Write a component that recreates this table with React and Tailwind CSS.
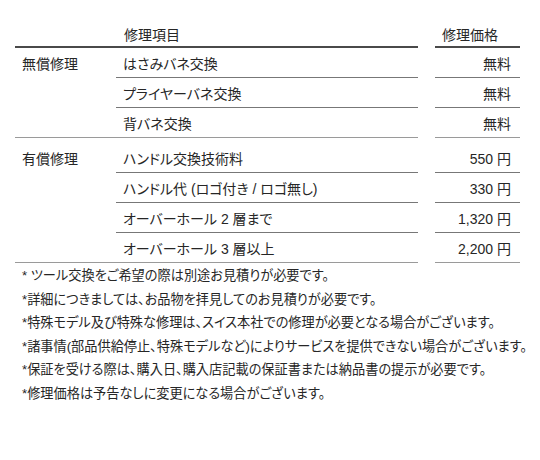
import React from "react";

const groups = [
  {
    name: "無償修理",
    mt: "",
    rows: [
      ["はさみバネ交換", "無料"],
      ["プライヤーバネ交換", "無料"],
      ["背バネ交換", "無料"],
    ],
  },
  {
    name: "有償修理",
    mt: "mt-[5px]",
    rows: [
      ["ハンドル交換技術料", "550 円"],
      ["ハンドル代 (ロゴ付き / ロゴ無し)", "330 円"],
      ["オーバーホール 2 層まで", "1,320 円"],
      ["オーバーホール 3 層以上", "2,200 円"],
    ],
  },
];

const notes = [
  "* ツール交換をご希望の際は別途お見積りが必要です。",
  "*詳細につきましては、お品物を拝見してのお見積りが必要です。",
  "*特殊モデル及び特殊な修理は、スイス本社での修理が必要となる場合がございます。",
  "*諸事情(部品供給停止、特殊モデルなど)によりサービスを提供できない場合がございます。",
  "*保証を受ける際は、購入日、購入店記載の保証書または納品書の提示が必要です。",
  "*修理価格は予告なしに変更になる場合がございます。",
];

export default function App() {
  return (
    <div className="w-[540px] h-[460px] bg-white text-[#262626] font-['Liberation_Sans','Noto_Sans_CJK_JP',sans-serif] [font-feature-settings:'palt'] overflow-hidden">
      <div className="ml-[15px] pt-[22px] w-[505px] text-[14px]">
        <div className="flex">
          <div className="flex w-[403px] h-[26px] border-b-2 border-[#4a4a4a]">
            <div className="w-[101px]" />
            <div className="pl-[8px] pt-[4px] leading-[18px]">修理項目</div>
          </div>
          <div className="ml-[17px] w-[85px] h-[26px] border-b-2 border-[#4a4a4a] pl-[7px] pt-[4px] leading-[18px]">
            修理価格
          </div>
        </div>
        {groups.map((g) => (
          <div key={g.name} className={`flex ${g.mt}`}>
            <div className="w-[101px] border-b border-[#9a9a9a] pl-[7px] pt-[7px] leading-[18px]">
              {g.name}
            </div>
            <div className="flex flex-col">
              {g.rows.map(([item, price], i) => {
                const last = i === g.rows.length - 1;
                return (
                  <div key={item} className="flex">
                    <div
                      className={`w-[302px] h-[30px] border-b pl-[7px] pt-[7px] leading-[18px] ${
                        last ? "border-[#9a9a9a]" : "border-[#777777]"
                      }`}
                    >
                      {item}
                    </div>
                    <div
                      className={`ml-[17px] w-[85px] h-[30px] border-b pr-[9px] pt-[7px] leading-[18px] text-right ${
                        last ? "border-[#9a9a9a]" : "border-[#777777]"
                      }`}
                    >
                      {price}
                    </div>
                  </div>
                );
              })}
            </div>
          </div>
        ))}
      </div>
      <div className="pl-[22px] mt-[1px] text-[13.2px] leading-[23.6px]">
        {notes.map((n) => (
          <div key={n} className="whitespace-nowrap">
            {n}
          </div>
        ))}
      </div>
    </div>
  );
}
